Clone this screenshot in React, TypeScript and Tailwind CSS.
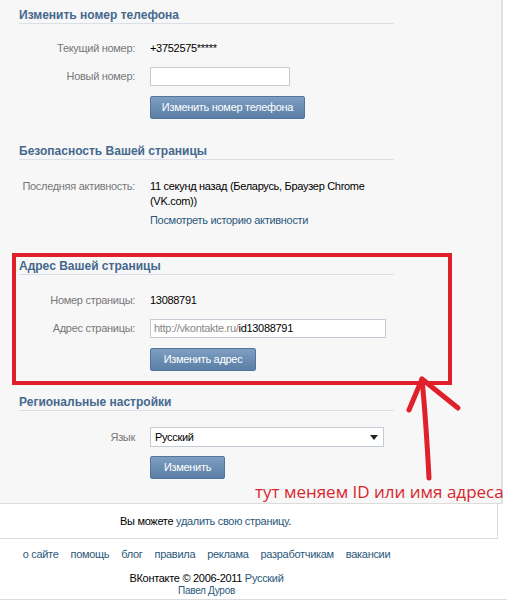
import React from 'react';

const Header = ({ title }: { title: string }) => (
  <div className="ml-[19px] w-[375px] border-b border-[#d9e0e7] text-[12px] leading-[16px] font-bold tracking-normal text-[#45688e]">
    {title}
  </div>
);

const Row = ({ label, children, className = '' }: { label: string; children: React.ReactNode; className?: string }) => (
  <div className={`flex items-center ${className}`}>
    <div className="w-[135px] shrink-0 text-right text-[#777]">{label}</div>
    <div className="ml-[15px]">{children}</div>
  </div>
);

const Button = ({ text, w }: { text: string; w: string }) => (
  <div className={`ml-[150px] ${w} h-[23px] flex items-center justify-center rounded-[2px] border border-[#52769c] bg-linear-to-b from-[#7f9ec2] to-[#5a7ea5] text-white`}>
    {text}
  </div>
);

const links = ['о сайте', 'помощь', 'блог', 'правила', 'реклама', 'разработчикам', 'вакансии'];

export default function App() {
  return (
    <div className="relative w-[507px] h-[600px] overflow-hidden bg-white text-[11px] leading-[15px] tracking-[-0.3px] text-black" style={{ fontFamily: '"Liberation Sans", Arial, sans-serif' }}>
      <div className="w-[503px] bg-[#f7f7f7] border-r-2 border-r-[#e2e2e2] border-b border-b-[#dcdcdc] pt-[7px] pb-[24px]">
        <Header title="Изменить номер телефона" />
        <Row label="Текущий номер:" className="mt-[17px]">+3752575*****</Row>
        <Row label="Новый номер:" className="mt-[11px]">
          <div className="w-[140px] h-[19px] bg-white border border-[#c3cbd4]" />
        </Row>
        <div className="mt-[10px]">
          <Button text="Изменить номер телефона" w="w-[155px]" />
        </div>

        <div className="mt-[24px]">
          <Header title="Безопасность Вашей страницы" />
        </div>
        <div className="mt-[19px] flex">
          <div className="w-[135px] shrink-0 text-right text-[#777]">Последняя активность:</div>
          <div className="ml-[15px] w-[260px]">11 секунд назад (Беларусь, Браузер Chrome (VK.com))</div>
        </div>
        <div className="mt-[4px] ml-[150px] text-[#2b587a]">Посмотреть историю активности</div>

        <div className="mt-[30px]">
          <Header title="Адрес Вашей страницы" />
        </div>
        <Row label="Номер страницы:" className="mt-[18px]">13088791</Row>
        <Row label="Адрес страницы:" className="mt-[11px]">
          <div className="w-[236px] h-[19px] bg-white border border-[#c3cbd4] flex items-center pl-[3px]">
            <span className="text-[#888]">http://vkontakte.ru/</span>
            <span>id13088791</span>
          </div>
        </Row>
        <div className="mt-[10px]">
          <Button text="Изменить адрес" w="w-[106px]" />
        </div>

        <div className="mt-[23px]">
          <Header title="Региональные настройки" />
        </div>
        <Row label="Язык" className="mt-[16px]">
          <div className="w-[234px] h-[20px] bg-white border border-[#c3cbd4] flex items-center justify-between pl-[4px] pr-[5px]">
            <span>Русский</span>
            <svg width="8" height="5" viewBox="0 0 8 5"><path d="M0 0h8L4 5z" fill="#222" /></svg>
          </div>
        </Row>
        <div className="mt-[9px]">
          <Button text="Изменить" w="w-[75px]" />
        </div>
      </div>

      <div className="w-[498px] h-[35px] bg-white border-r border-b border-[#dcdcdc] flex items-center pl-[120px]">
        <span>Вы можете <span className="text-[#2b587a]">удалить свою страницу</span>.</span>
      </div>

      <div className="w-[413px] mt-[8px] flex justify-center gap-[12px] text-[#2b587a]">
        {links.map((l) => (
          <span key={l}>{l}</span>
        ))}
      </div>
      <div className="w-[413px] mt-[9px] text-center leading-[14px]">
        ВКонтакте © 2006-2011 <span className="text-[#2b587a]">Русский</span>
      </div>
      <div className="w-[413px] text-center text-[10px] leading-[12px] text-[#2b587a]">Павел Дуров</div>
      <div className="mt-[2px] h-[2px] bg-[#dcdcdc]" />

      {/* red annotation drawn over the screenshot */}
      <svg className="absolute left-0 top-0 pointer-events-none" width="507" height="600">
        <rect x="14" y="255" width="436" height="128" fill="none" stroke="#e0212b" strokeWidth="4" />
        <path d="M429 478 C427 440 425 410 422 379" fill="none" stroke="#e0212b" strokeWidth="5" strokeLinecap="round" />
        <path d="M409 410 L422 379 L458 408" fill="none" stroke="#e0212b" strokeWidth="5" strokeLinecap="round" strokeLinejoin="round" />
      </svg>
      <div className="absolute left-[255px] top-[481px] text-[17px] leading-[22px] tracking-normal text-[#d9262f] whitespace-nowrap" style={{ fontFamily: '"Open Sans", sans-serif' }}>
        тут меняем ID или имя адреса
      </div>
    </div>
  );
}
